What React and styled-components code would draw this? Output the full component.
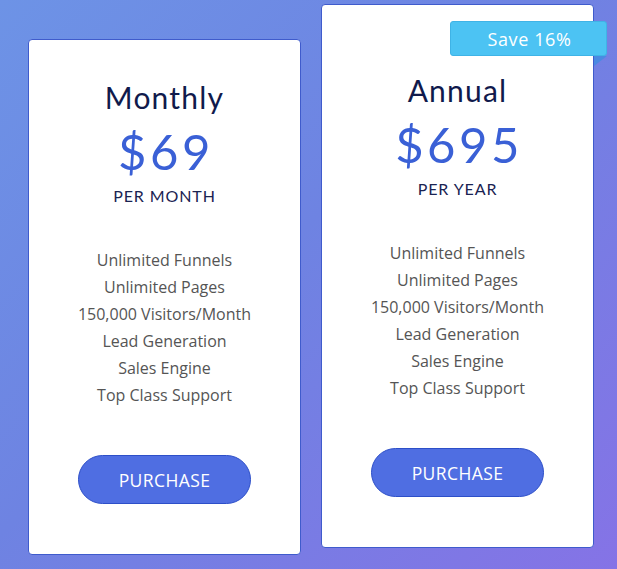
import styled, { createGlobalStyle } from "styled-components";

const GlobalStyle = createGlobalStyle`
  html, body {
    margin: 0;
    padding: 0;
  }
  body {
    width: 617px;
    height: 569px;
    overflow: hidden;
    background: linear-gradient(135deg, #6d93e6 0%, #6e83e2 45%, #8573e6 100%);
    font-family: "Open Sans", "Liberation Sans", sans-serif;
  }
`;

const Page = styled.div`
  display: flex;
  align-items: flex-start;
  gap: 20px;
  padding: 4px 0 0 28px;
`;

const Card = styled.div`
  position: relative;
  box-sizing: border-box;
  width: ${(p) => (p.$featured ? 273 : 273)}px;
  height: ${(p) => (p.$featured ? 544 : 516)}px;
  margin-top: ${(p) => (p.$featured ? 0 : 35)}px;
  padding-top: ${(p) => (p.$featured ? 63 : 35)}px;
  background: #fff;
  border: 1px solid #3f5bcc;
  border-radius: 4px;
  display: flex;
  flex-direction: column;
  align-items: center;
`;

const Title = styled.h2`
  margin: 0;
  font-family: Lato, "Noto Sans", sans-serif;
  font-weight: 400;
  font-size: 30px;
  letter-spacing: 1.2px;
  line-height: 44px;
  color: #101a4c;
`;

const Price = styled.div`
  margin-top: 6px;
  padding-left: 3px;
  font-family: Lato, "Noto Sans", sans-serif;
  font-size: 49px;
  letter-spacing: 3.5px;
  line-height: 52px;
  color: #3a60d6;
`;

const Period = styled.div`
  margin-top: 9px;
  font-family: Lato, "Noto Sans", sans-serif;
  font-size: 16px;
  letter-spacing: 0.9px;
  color: #1a2352;
`;

const Features = styled.ul`
  list-style: none;
  margin: 42px 0 0;
  padding: 0;
  text-align: center;
`;

const Feature = styled.li`
  font-size: 16px;
  line-height: 27px;
  color: #555;
`;

const Button = styled.button`
  margin-top: 46px;
  width: 173px;
  height: 49px;
  border-radius: 25px;
  border: 1px solid #2d4fc8;
  background: #4f6ee2;
  color: #fff;
  font-family: "Open Sans", "Liberation Sans", sans-serif;
  font-size: 17.5px;
  letter-spacing: 0.4px;
  cursor: pointer;
`;

const Badge = styled.div`
  position: absolute;
  top: 16px;
  left: 128px;
  width: 157px;
  height: 35px;
  box-sizing: border-box;
  padding-left: 2px;
  background: #4cc3f3;
  border: 1px solid #3fb3e6;
  border-radius: 3px;
  color: #fff;
  font-size: 18px;
  letter-spacing: 0.6px;
  display: flex;
  align-items: center;
  justify-content: center;
  &::after {
    content: "";
    position: absolute;
    right: -1px;
    top: 34px;
    border-left: 13px solid #4a8ae2;
    border-bottom: 10px solid transparent;
  }
`;

const features = [
  "Unlimited Funnels",
  "Unlimited Pages",
  "150,000 Visitors/Month",
  "Lead Generation",
  "Sales Engine",
  "Top Class Support",
];

const plans = [
  { name: "Monthly", price: "$69", period: "PER MONTH" },
  { name: "Annual", price: "$695", period: "PER YEAR", badge: "Save 16%" },
];

export default function App() {
  return (
    <>
      <GlobalStyle />
      <Page>
        {plans.map((plan) => (
          <Card key={plan.name} $featured={!!plan.badge}>
            {plan.badge ? <Badge>{plan.badge}</Badge> : null}
            <Title>{plan.name}</Title>
            <Price>{plan.price}</Price>
            <Period>{plan.period}</Period>
            <Features>
              {features.map((f) => (
                <Feature key={f}>{f}</Feature>
              ))}
            </Features>
            <Button>PURCHASE</Button>
          </Card>
        ))}
      </Page>
    </>
  );
}
